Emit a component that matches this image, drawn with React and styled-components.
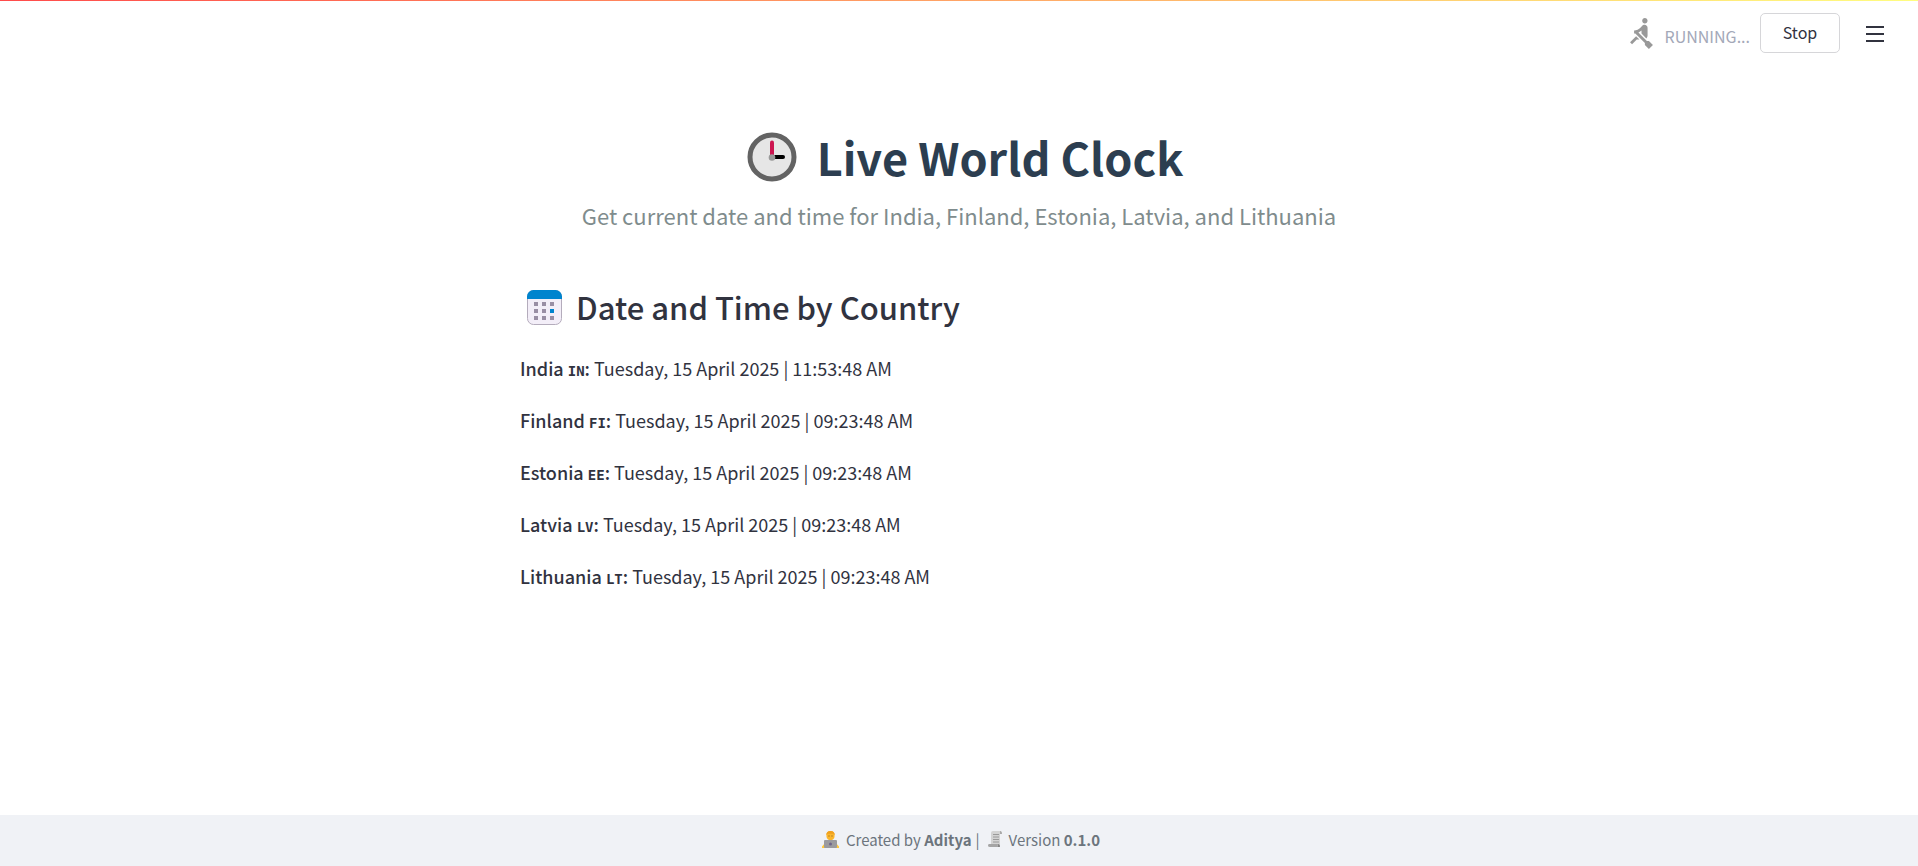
import React from 'react';
import styled, { createGlobalStyle } from 'styled-components';

const GlobalStyle = createGlobalStyle`
  *, *::before, *::after { box-sizing: border-box; }
  body {
    margin: 0;
    background: #ffffff;
    color: #31333f;
    font-family: "Noto Sans CJK SC", "Noto Sans", sans-serif;
    font-size: 18px;
    line-height: 32px;
  }
`;

const Page = styled.div`
  display: flex;
  flex-direction: column;
  min-height: 100vh;
`;

const Decoration = styled.div`
  height: 1px;
  background: linear-gradient(90deg, #ff4b4b, #fffd80);
`;

const Header = styled.header`
  display: flex;
  align-items: center;
  justify-content: flex-end;
  height: 64px;
  padding-right: 28px;
`;

const Status = styled.div`
  display: flex;
  align-items: center;
  gap: 12px;
  margin-right: 10px;
  color: #a3a8b8;
  font-size: 16px;
`;

const StatusText = styled.span`
  padding-top: 6px;
`;

const StopButton = styled.button`
  width: 80px;
  height: 40px;
  padding: 0 0 2px;
  border: 1px solid #d6d6d9;
  border-radius: 5px;
  background: #ffffff;
  color: inherit;
  font: inherit;
  font-size: 16px;
  line-height: 32px;
  cursor: pointer;
`;

const MenuButton = styled.button`
  display: flex;
  align-items: center;
  justify-content: center;
  width: 30px;
  height: 40px;
  margin-left: 20px;
  padding: 2px 0 0;
  border: 0;
  background: transparent;
  color: inherit;
  cursor: pointer;
`;

const Main = styled.main`
  flex: 1;
  width: 100%;
  max-width: 878px;
  margin: 0 auto;
  padding-top: 62px;
`;

const Title = styled.h1`
  display: flex;
  align-items: center;
  justify-content: center;
  gap: 20px;
  margin: 0 0 12px;
  padding-left: 12px;
  color: #2c3e50;
  font-size: 45px;
  font-weight: 700;
  line-height: 60px;
`;

const Subtitle = styled.p`
  margin: 0;
  color: #7f8c8d;
  font-size: 22px;
  line-height: 32px;
  text-align: center;
`;

const SectionTitle = styled.h2`
  display: flex;
  align-items: center;
  gap: 14px;
  margin: 54px 0 23px;
  padding-left: 7px;
  font-size: 31px;
  font-weight: 500;
  line-height: 44px;
`;

const CountryList = styled.div`
  display: flex;
  flex-direction: column;
  gap: 20px;
`;

const CountryRow = styled.p`
  margin: 0;
`;

const Name = styled.strong`
  font-weight: 500;
`;

const Code = styled.span`
  font-family: "DejaVu Sans Mono", monospace;
  font-size: 14px;
  font-weight: 700;
  line-height: 1;
`;

const Footer = styled.footer`
  display: flex;
  align-items: center;
  justify-content: center;
  height: 51px;
  padding: 0 0 2px 4px;
  background: #f0f2f6;
  color: #6c757d;
  font-size: 15px;
`;

const FooterItem = styled.span`
  display: flex;
  align-items: center;
  gap: 7px;
`;

const Divider = styled.span`
  margin: 0 8px 0 4px;
`;

const RowerIcon = () => (
  <svg width="23" height="31" viewBox="4 1 17 23" fill="#999999" aria-hidden="true">
    <path d="M8.5 14.5L4 19l1.5 1.5L9 17h2l-2.5-2.5zM15 1c-1.1 0-2 .9-2 2s.9 2 2 2 2-.9 2-2-.9-2-2-2zm6 20.01L18 24l-2.99-3.01V19.5l-7.1-7.09c-.31.05-.61.07-.91.07v-2.16c1.66.03 3.61-.87 4.67-2.04l1.4-1.55c.19-.21.43-.38.69-.5.29-.14.62-.23.96-.23h.03C15.99 6.01 17 7.02 17 8.26v5.75c0 .84-.35 1.61-.92 2.16l-3.58-3.58v-2.27c-.63.52-1.43 1.02-2.29 1.39L16.5 18H18l3 3.01z" />
  </svg>
);

const MenuIcon = () => (
  <svg width="18" height="17" viewBox="0 0 18 17" fill="currentColor" aria-hidden="true">
    <path d="M0 0H18V2H0ZM0 7H18V9H0ZM0 14H18V16H0Z" />
  </svg>
);

const ClockIcon = () => (
  <svg width="50" height="50" viewBox="0 0 50 50" aria-hidden="true">
    <circle cx="25" cy="25" r="22" fill="#e6e6e6" stroke="#636363" strokeWidth="5" />
    <path d="M25 25V10.5" stroke="#cc1550" strokeWidth="4" strokeLinecap="round" />
    <path d="M25 25H36" stroke="#000000" strokeWidth="4" strokeLinecap="round" />
    <circle cx="25" cy="25.5" r="3.3" fill="#999999" />
  </svg>
);

const CalendarIcon = () => (
  <svg width="35" height="35" viewBox="0 0 35 35" aria-hidden="true">
    <rect x="0.5" y="0.5" width="34" height="34" rx="6" fill="#f3eef8" stroke="#b4acbc" />
    <path d="M0 9V6.5A6.5 6.5 0 0 1 6.5 0H28.5A6.5 6.5 0 0 1 35 6.5V9Z" fill="#0084ce" />
    {[12, 19, 26].map((y) =>
      [7, 15, 23].map((x) => (
        <rect key={`${x}-${y}`} x={x} y={y} width="4" height="4" fill={x === 23 && y === 19 ? '#0084ce' : '#998ea4'} />
      ))
    )}
  </svg>
);

const CoderIcon = () => (
  <svg width="17" height="18" viewBox="0 0 17 18" aria-hidden="true">
    <path d="M0 17V15.5L3 12Q3.5 9 7 9H10Q13.5 9 14 12L17 15.5V17Z" fill="#ffc83d" />
    <path d="M4.5 4Q4.5 0 8.5 0Q12.5 0 12.5 4V6Q12 9 8.5 9.3Q5 9 4.5 6Z" fill="#fbb62d" />
    <path d="M4.3 4.5Q4 0 8.5 0Q13 0 12.7 4.5L11.5 2.7H5.5Z" fill="#f0a01e" />
    <path d="M6.5 4.5H7.5V5.5H6.5ZM9.5 4.5H10.5V5.5H9.5Z" fill="#805a26" />
    <rect x="2" y="9" width="13" height="8" rx="1" fill="#9b9b9f" />
    <circle cx="8.5" cy="13" r="1.5" fill="#70658a" />
  </svg>
);

const ScrollIcon = () => (
  <svg width="14" height="17" viewBox="0 0 14 17" aria-hidden="true">
    <path d="M3 2Q3 0 5 0H12Q13.5 0 13.5 2H12V15H3Z" fill="#d3d3d3" />
    <path d="M12 0Q14 0 14 3H12Z" fill="#a8a8a8" />
    <path d="M5 3.5H11M5 6H11M5 8.5H11M5 11H11" stroke="#9a9a9a" />
    <path d="M1 13H10Q9 15 11 16H2Q0 16 0 14.5Q0 13 1 13Z" fill="#a5a5a5" />
    <path d="M10 13Q12 13 12 16H10Z" fill="#858585" />
  </svg>
);

const countries = [
  { name: 'India', code: 'IN', time: '11:53:48 AM' },
  { name: 'Finland', code: 'FI', time: '09:23:48 AM' },
  { name: 'Estonia', code: 'EE', time: '09:23:48 AM' },
  { name: 'Latvia', code: 'LV', time: '09:23:48 AM' },
  { name: 'Lithuania', code: 'LT', time: '09:23:48 AM' },
];

export default function App() {
  return (
    <Page>
      <GlobalStyle />
      <Decoration />
      <Header>
        <Status role="status">
          <RowerIcon />
          <StatusText>RUNNING...</StatusText>
        </Status>
        <StopButton type="button">Stop</StopButton>
        <MenuButton type="button" aria-label="Main menu">
          <MenuIcon />
        </MenuButton>
      </Header>
      <Main>
        <Title>
          <ClockIcon />
          Live World Clock
        </Title>
        <Subtitle>Get current date and time for India, Finland, Estonia, Latvia, and Lithuania</Subtitle>
        <SectionTitle>
          <CalendarIcon />
          Date and Time by Country
        </SectionTitle>
        <CountryList>
          {countries.map(({ name, code, time }) => (
            <CountryRow key={code}>
              <Name>
                {name} <Code>{code}</Code>:
              </Name>{' '}
              Tuesday, 15 April 2025 | {time}
            </CountryRow>
          ))}
        </CountryList>
      </Main>
      <Footer>
        <FooterItem>
          <CoderIcon />
          <span>
            Created by <b>Aditya</b>
          </span>
        </FooterItem>
        <Divider>|</Divider>
        <FooterItem>
          <ScrollIcon />
          <span>
            Version <b>0.1.0</b>
          </span>
        </FooterItem>
      </Footer>
    </Page>
  );
}
